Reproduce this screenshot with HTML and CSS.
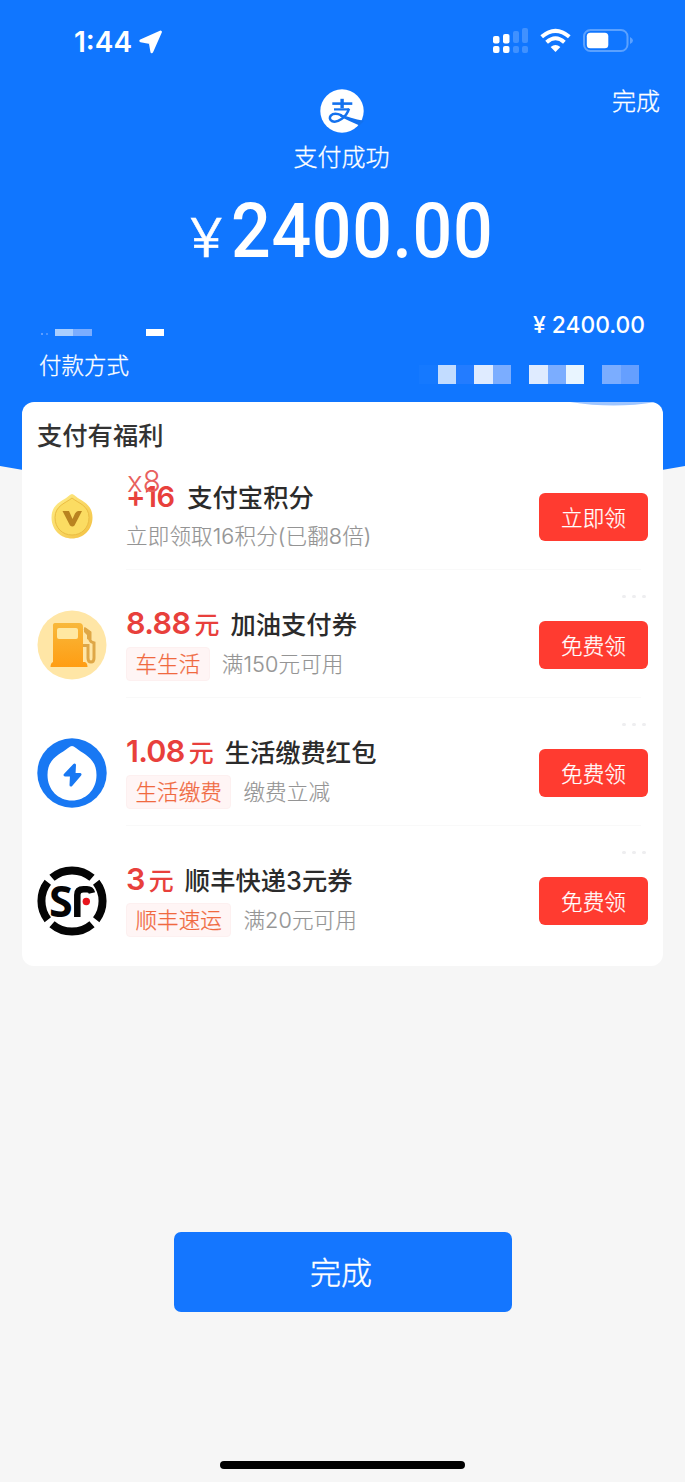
FILE: index.html
```
<!DOCTYPE html>
<html lang="zh-CN">
<head>
<meta charset="utf-8">
<title>支付成功</title>
<link rel="stylesheet" href="styles.css">
</head>
<body>
<main class="page">
  <svg class="backdrop" viewBox="0 0 685 482" aria-hidden="true"><path d="M0 0H685V466Q342 530 0 466Z" fill="#1076ff"/></svg>

  <header class="status">
    <div class="clock">1:44
      <svg class="arrow" viewBox="0 0 24 24"><path d="M21.500 2 1.800 10.900 11.200 12.600 12.800 21.800Z" fill="#fff" stroke="#fff" stroke-width="2.800" stroke-linejoin="round"/></svg>
    </div>
    <svg class="indicators" viewBox="0 0 142 28">
      <g fill="#fff">
        <rect x="1" y="8" width="6.500" height="7.500" rx="2"/><rect x="11" y="6" width="6.500" height="9.500" rx="2"/>
        <rect x="1" y="18" width="6.500" height="7" rx="2"/><rect x="11" y="18" width="6.500" height="7" rx="2"/>
        <g opacity=".2"><rect x="21" y="3" width="6" height="12" rx="2"/><rect x="30" y="0" width="6" height="15" rx="2"/><rect x="21" y="18" width="6" height="7" rx="2"/><rect x="30" y="18" width="6" height="7" rx="2"/></g>
        <path d="M63.500 24 58.600 19Q63.500 15 68.400 19Z"/>
      </g>
      <g fill="none" stroke="#fff" stroke-width="4"><path d="M49.700 8.800Q63.500-3.200 77.300 8.800"/><path d="M54.600 14.300Q63.500 6.200 72.400 14.300"/></g>
      <rect x="92" y="2" width="43.500" height="21" rx="6.500" fill="none" stroke="#5ba1ff" stroke-width="2"/>
      <rect x="94.800" y="4.800" width="21.500" height="15.500" rx="3.500" fill="#fff"/>
      <path d="M138 9v7q3-1.500 3-3.500T138 9Z" fill="#5ba1ff"/>
    </svg>
  </header>

  <section class="result">
    <span class="finish-link">完成</span>
    <svg class="brand" viewBox="0 0 44 44">
      <circle cx="22" cy="22" r="21.700" fill="#fff"/>
      <g fill="none" stroke="#1371ee">
        <path d="M12.300 14.600H32.300" stroke-width="2.600"/>
        <path d="M22.100 9.800V19.200" stroke-width="3.400"/>
        <path d="M14 20.400H29" stroke-width="2.200"/>
        <path d="M29 19.600Q27.200 26 21.500 30Q16 34 11.800 32Q8.500 29.500 10.800 26.600Q14.200 23.100 21.500 26.300" stroke-width="2.500"/>
      </g>
      <path d="M20 24.800Q30 29.300 44 31.800L39.500 36.500Q29 32 20 27.500Z" fill="#1371ee"/>
    </svg>
    <h1 class="state">支付成功</h1>
    <div class="amount"><span class="yen">¥</span><span class="sum">2400.00</span></div>
  </section>

  <section class="details">
    <div class="detail-row">
      <div class="mosaic small"><i class="dots-mark"></i><i class="m2"></i><i class="m3"></i><i class="gap"></i><i class="m7"></i></div>
      <span class="paid">¥ 2400.00</span>
    </div>
    <div class="detail-row second">
      <span class="method">付款方式</span>
      <div class="mosaic"><i class="m0"></i><i class="m1"></i><i class="m4"></i><i class="m5"></i><i class="m3"></i><i></i><i class="m5"></i><i class="m3"></i><i class="m6"></i><i></i><i class="m3"></i><i class="m8"></i></div>
    </div>
  </section>

  <section class="card">
    <svg class="sheen" viewBox="0 0 86 4"><path d="M0 0H86Q44 7 0 0Z" fill="#9ec5ff"/></svg>
    <h2 class="card-title">支付有福利</h2>

    <article class="offer first">
      <svg class="icon" viewBox="0 0 70 70">
        <defs><linearGradient id="gold" x1="0" y1="0" x2="1" y2="1"><stop offset="0" stop-color="#ffef8b"/><stop offset="1" stop-color="#f3bf3f"/></linearGradient></defs>
        <path d="M35 12Q36.500 12 39 14.500C45 19.500 55.500 22 55.500 35.500C55.500 48 46 56.500 35 56.500S14.500 48 14.500 35.500C14.500 22 25 19.500 31 14.500Q33.500 12 35 12Z" fill="url(#gold)"/>
        <path d="M35 16C41 21 52 23.500 52 35.500C52 46 44.500 53 35 53S18 46 18 35.500C18 23.500 29 21 35 16Z" fill="#fbdc62" stroke="#eabc42" stroke-width="1"/>
        <path d="M25.500 29H32L35.500 37 38 31.500Q39.500 29 41 29H45L37.500 43.500Q35.500 45.500 33 43.500Z" fill="#b98320"/>
      </svg>
      <div class="info">
        <p class="headline"><span class="ghost">x8</span><b class="num points">+16</b><span class="name points-name">支付宝积分</span></p>
        <p class="sub"><span class="note">立即领取16积分(已翻8倍)</span></p>
      </div>
      <span class="claim">立即领</span>
    </article>

    <article class="offer">
      <span class="more"><i></i><i></i><i></i></span>
      <svg class="icon" viewBox="0 0 70 70">
        <defs><linearGradient id="fuel" x1="0" y1="0" x2="0" y2="1"><stop offset="0" stop-color="#f8b83b"/><stop offset="1" stop-color="#ff9d13"/></linearGradient></defs>
        <circle cx="35" cy="35" r="34.500" fill="#ffe6a6"/>
        <path d="M47.500 18.500 53 22.500V30Q53.500 32 57 33V48Q57 52 54 52Q51 52 51 48V35.500H46" fill="none" stroke="#dfa746" stroke-width="3"/>
        <path d="M47 17 54 22V31L50 29V25L47 22Z" fill="#dfa746"/>
        <path d="M18 13H42Q46 13 46 17V52H48Q50.500 53 50.500 57H13.500Q13.500 53 16 52V17Q15.500 13 18 13Z" fill="url(#fuel)"/>
        <rect x="20" y="18" width="21" height="11" rx="2" fill="#ffe8a1"/>
      </svg>
      <div class="info">
        <p class="headline"><b class="num">8.88</b><b class="unit">元</b><span class="name">加油支付券</span></p>
        <p class="sub"><span class="tag">车生活</span><span class="note">满150元可用</span></p>
      </div>
      <span class="claim">免费领</span>
    </article>

    <article class="offer">
      <span class="more"><i></i><i></i><i></i></span>
      <svg class="icon" viewBox="0 0 70 70">
        <circle cx="35" cy="35" r="34.700" fill="#1878f3"/>
        <path d="M35 8Q36.500 8 39 10C47 16.500 59.500 20 59.500 37C59.500 52 48.500 62.500 35 62.500S10.500 52 10.500 37C10.500 20 23 16.500 31 10Q33.500 8 35 8Z" fill="#fff"/>
        <path d="M37.500 27 28 37H34.500L34 47 43 36.500H37Z" fill="#1878f3" stroke="#1878f3" stroke-width="3" stroke-linejoin="round"/>
      </svg>
      <div class="info">
        <p class="headline"><b class="num wide">1.08</b><b class="unit">元</b><span class="name">生活缴费红包</span></p>
        <p class="sub"><span class="tag">生活缴费</span><span class="note">缴费立减</span></p>
      </div>
      <span class="claim">免费领</span>
    </article>

    <article class="offer">
      <span class="more"><i></i><i></i><i></i></span>
      <svg class="icon" viewBox="0 0 70 70">
        <g fill="none" stroke="#050505" stroke-width="8">
          <path d="M15 11.800A30.700 30.700 0 0 1 55 11.800"/><path d="M59.200 16.300A30.700 30.700 0 0 1 59.200 53.700"/>
          <path d="M55 58.200A30.700 30.700 0 0 1 15 58.200"/><path d="M10.800 53.700A30.700 30.700 0 0 1 10.800 16.300"/>
          <path d="M40.300 51V29Q40.300 23.300 46.500 23.300H50Q54 23.300 55 27" stroke-width="6.500"/>
        </g>
        <text class="logo-s" x="12" y="50.500">S</text>
        <circle cx="49.300" cy="35.500" r="3.700" fill="#e8141c"/>
      </svg>
      <div class="info">
        <p class="headline"><b class="num">3</b><b class="unit">元</b><span class="name">顺丰快递3元券</span></p>
        <p class="sub"><span class="tag">顺丰速运</span><span class="note">满20元可用</span></p>
      </div>
      <span class="claim">免费领</span>
    </article>
  </section>

  <button class="done">完成</button>
  <div class="home-bar"></div>
</main>
</body>
</html>
```
FILE: styles.css
```
* { box-sizing: border-box; margin: 0; padding: 0; }
body { background: #f6f6f6; font-family: Inter, "Noto Sans CJK SC", sans-serif; }
i { font-style: normal; }
.page { position: relative; display: flex; flex-direction: column; align-items: center; width: 685px; height: 1482px; overflow: hidden; isolation: isolate; }
.backdrop { position: absolute; top: 0; left: 0; width: 685px; height: 482px; z-index: -1; }

.status { width: 100%; height: 84px; padding: 24px 51px 0 74px; display: flex; justify-content: space-between; align-items: flex-start; }
.clock { display: flex; align-items: center; gap: 7px; height: 36px; color: #fff; font-size: 28px; font-weight: 600; line-height: 36px; }
.arrow { width: 24px; height: 24px; }
.indicators { width: 142px; height: 28px; margin-top: 4px; }

.result { position: relative; width: 100%; height: 224px; padding: 5px 1px 0 0; display: flex; flex-direction: column; align-items: center; color: #fff; }
.finish-link { position: absolute; right: 25px; top: 0; font-size: 24px; line-height: 36px; font-weight: 300; -webkit-text-stroke: .3px; }
.brand { width: 44px; height: 44px; }
.state { margin-top: 8px; padding-right: 1px; font-size: 24px; line-height: 34px; font-weight: 300; -webkit-text-stroke: .3px; }
.amount { display: flex; align-items: baseline; margin-top: 11px; height: 90px; line-height: 90px; }
.yen { width: 41px; font-size: 53px; font-weight: 300; transform: scaleX(1.13); transform-origin: left; -webkit-text-stroke: .5px; }
.sum { margin-right: -23px; font-family: Roboto, sans-serif; font-size: 76px; font-weight: 500; letter-spacing: .7px; transform: scaleX(.92); transform-origin: left; }

.details { width: 100%; height: 94px; padding: 4px 40px 0 39px; color: #fff; }
.detail-row { height: 26px; display: flex; justify-content: space-between; align-items: center; }
.second { height: 36px; margin-top: 8px; }
.paid { font-size: 22.8px; font-weight: 500; line-height: 26px; }
.method { padding-top: 3px; font-size: 22.5px; line-height: 32px; font-weight: 300; -webkit-text-stroke: .3px; }
.mosaic { display: flex; margin: 21px 6px 0 0; }
.mosaic i { width: 18.3px; height: 19px; }
.mosaic.small { margin: 14px 0 0; }
.mosaic.small i { height: 7px; }
.mosaic.small .dots-mark { width: 16px; height: 7px; background: radial-gradient(circle at 3px 5px, #5d9eff 1px, transparent 1.5px), radial-gradient(circle at 8px 5px, #4a94ff 1px, transparent 1.5px); }
.mosaic.small .gap { width: 54px; }
.m0 { background: #1579ff; }
.m1 { background: #c2dcff; }
.m2 { background: #a9ceff; }
.m3 { background: #7badff; }
.m4 { background: #237cff; }
.m5 { background: #dfebff; }
.m6 { background: #e9f5ff; }
.m7 { background: #fff; }
.m8 { background: #659fff; }

.card { position: relative; width: 641px; height: 564px; padding: 15px 15px 0; border-radius: 12px; background: #fff; overflow: hidden; }
.sheen { position: absolute; right: 7px; top: 0; width: 86px; height: 4px; }
.card-title { height: 25px; color: #333; font-size: 25.3px; line-height: 37px; font-weight: 500; }
.offer { position: relative; height: 128px; display: flex; align-items: flex-start; }
.offer:not(:last-child)::after { content: ""; position: absolute; left: 89px; right: 7px; bottom: 0; height: 1px; background: #f9f9f9; }
.icon { flex: none; width: 70px; height: 70px; margin: 40px 19px 0 0; }
.info { flex: 1; height: 128px; padding-top: 35px; }
.headline { position: relative; display: flex; align-items: baseline; height: 36px; line-height: 36px; white-space: nowrap; }
.first .headline { top: 2px; }
.num { color: #e8403c; font-size: 30.500px; font-weight: 600; letter-spacing: -.6px; }
.wide { letter-spacing: -.7px; }
.points { font-size: 29px; letter-spacing: -.7px; }
.unit { color: #e8403c; font-size: 25px; font-weight: 500; margin-left: 4px; }
.name { color: #2b2b2b; font-size: 25.3px; font-weight: 500; margin-left: 11px; }
.points-name { margin-left: 13px; }
.ghost { position: absolute; left: 1px; top: -16px; color: #e8605d; font-size: 29.500px; font-weight: 300; }
.sub { display: flex; align-items: center; gap: 12px; height: 34px; margin-top: 6px; line-height: 34px; white-space: nowrap; }
.tag { padding: 0 8.500px; border: 1px solid #fdf0f0; border-radius: 4px; background: #fff5f5; color: #f0693f; font-size: 21.6px; font-weight: 300; line-height: 32px; -webkit-text-stroke: .25px; }
.note { color: #949494; font-size: 21.6px; font-weight: 300; line-height: 32px; letter-spacing: .1px; -webkit-text-stroke: .15px; }
.claim { flex: none; width: 109px; height: 48px; margin: 51px 0 0; border-radius: 6px; background: #ff3b30; color: #fff; font-size: 21.6px; font-weight: 300; line-height: 50px; text-align: center; -webkit-text-stroke: .25px; }
.more { position: absolute; right: 2px; top: 25px; display: flex; gap: 6px; }
.more i { width: 4px; height: 3px; border-radius: 2px; background: #eeeef0; }
.logo-s { font: 700 43px "Open Sans", sans-serif; fill: #050505; }

.done { width: 338px; height: 80px; margin-top: 266px; padding: 0 3px 3px 0; border: 0; border-radius: 7px; background: #1476ff; color: #fff; font: 300 31px/76px "Noto Sans CJK SC", sans-serif; -webkit-text-stroke: .4px; }
.home-bar { width: 245px; height: 8px; margin-top: 149px; border-radius: 4px; background: #000; }
```
